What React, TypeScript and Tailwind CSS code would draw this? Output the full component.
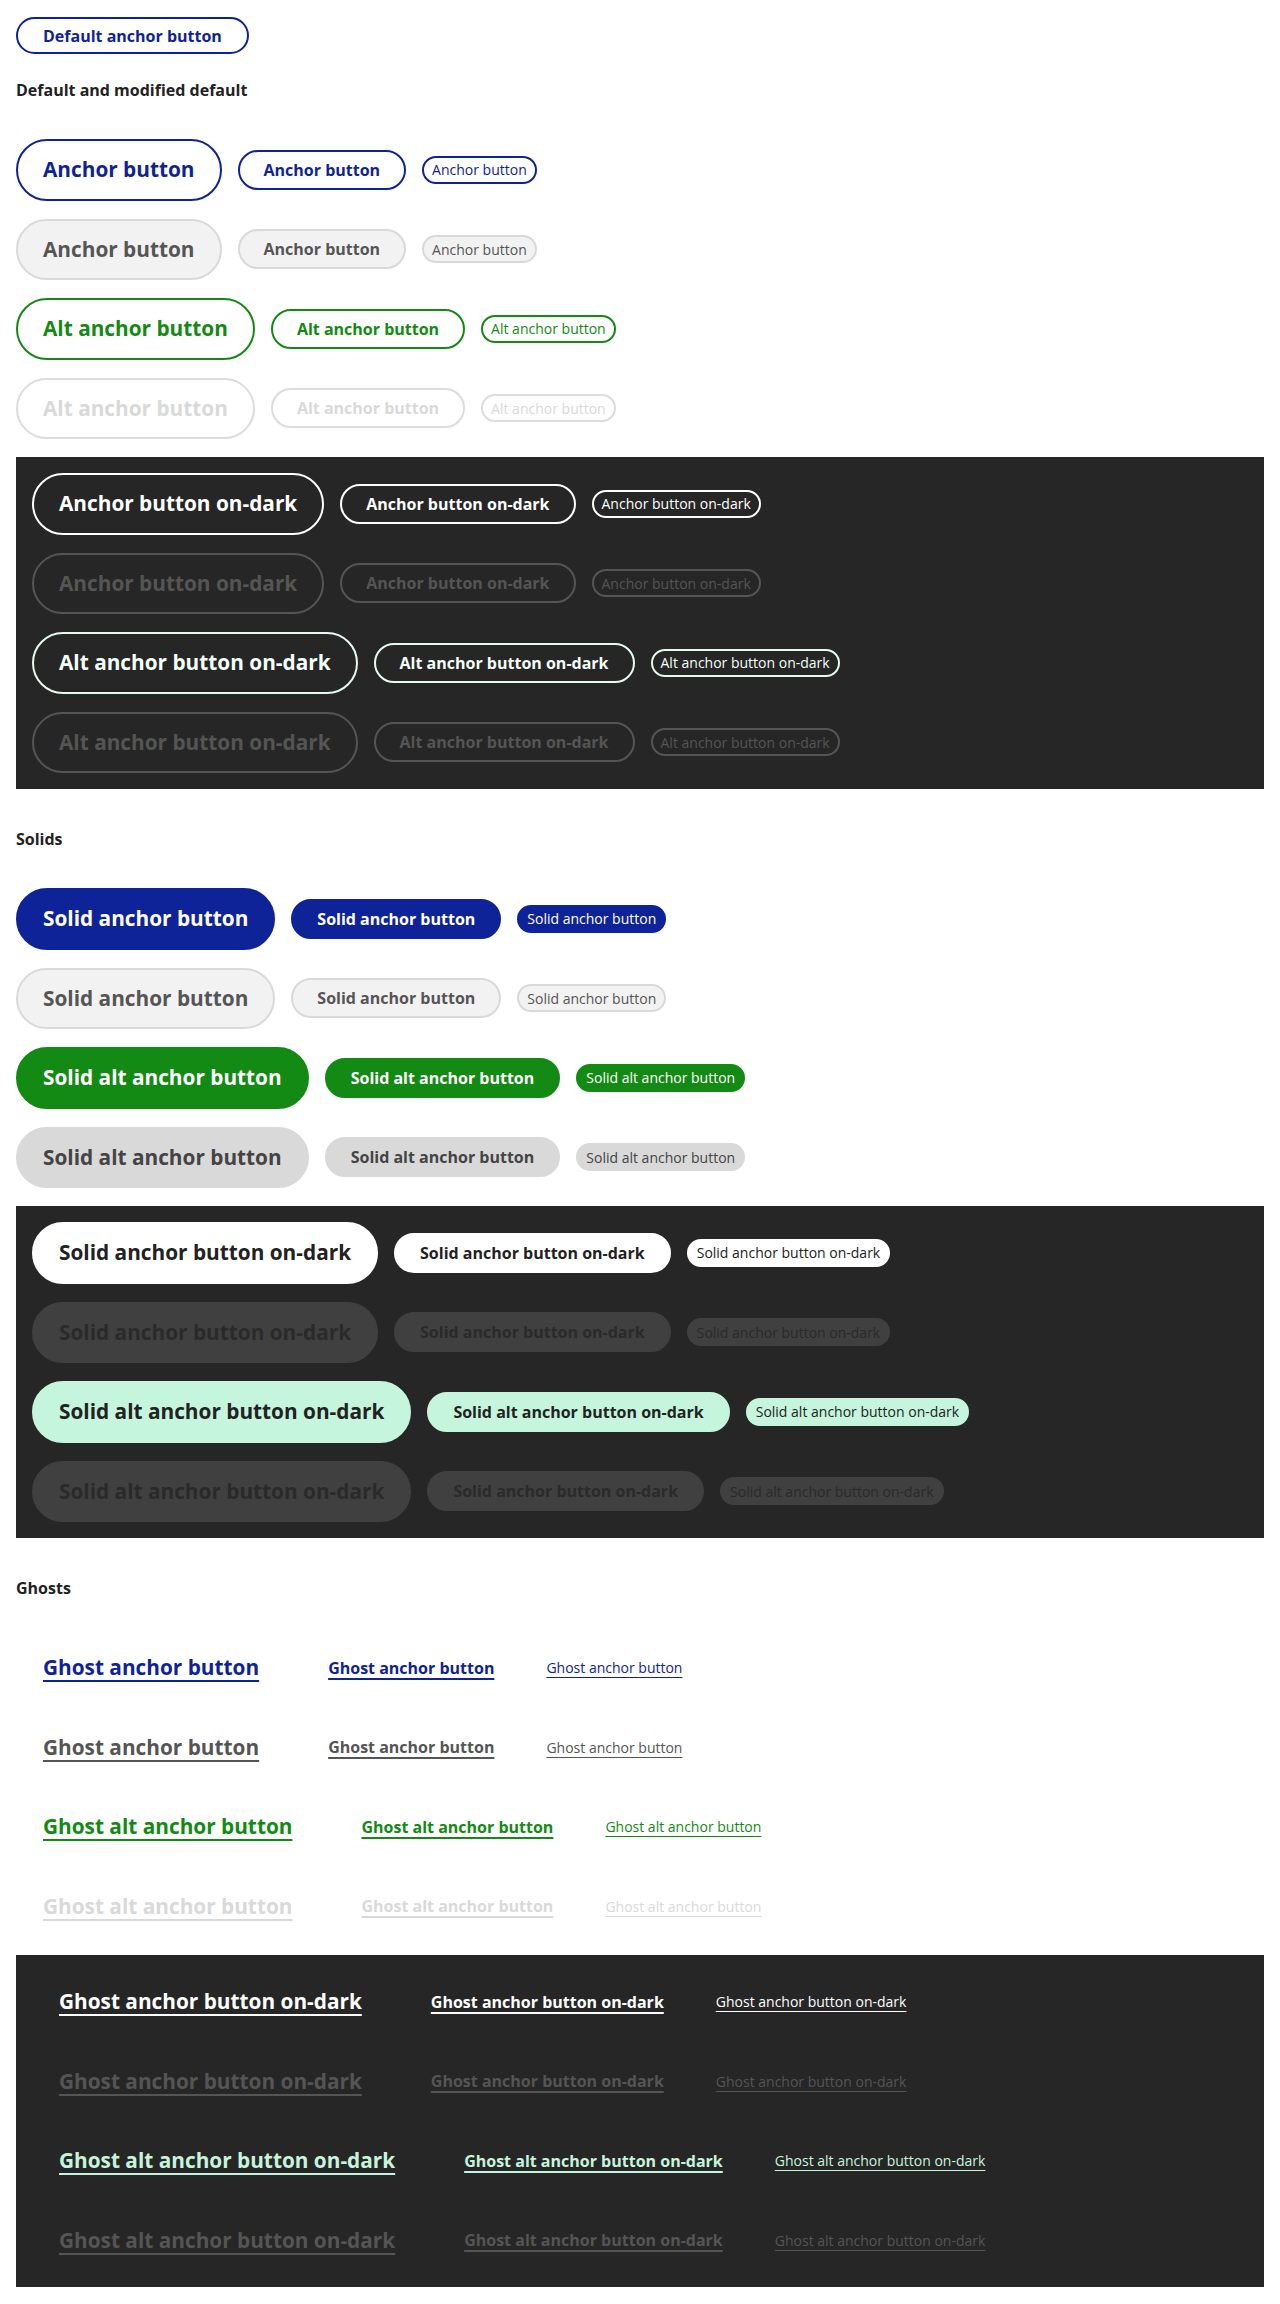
import React from "react";

type Size = "lg" | "md" | "sm";

const sizeCls: Record<Size, string> = {
    lg: "h-[61.5px] px-[25px] text-[20.8px] font-bold",
    md: "h-[40px] px-[24px] text-[16px] font-bold",
    sm: "h-[28px] px-[8px] text-[14px] font-normal",
};

const ghostLine: Record<Size, string> = {
    lg: "decoration-2 underline-offset-[5px]",
    md: "decoration-2 underline-offset-[4px]",
    sm: "decoration-1 underline-offset-[4px]",
};

type Row = { labels: [string, string, string]; cls: string; ghost?: boolean };

const AnchorButton = ({ size, label, cls, ghost }: { size: Size; label: string; cls: string; ghost?: boolean }) => (
    <a
        href="#"
        className={`inline-flex items-center whitespace-nowrap rounded-full border-2 ${sizeCls[size]} ${cls} ${ghost ? `underline ${ghostLine[size]}` : "no-underline"}`}
    >
        {label}
    </a>
);

const ButtonRow = ({ row }: { row: Row }) => (
    <div className="flex items-center gap-4">
        <AnchorButton size="lg" label={row.labels[0]} cls={row.cls} ghost={row.ghost} />
        <AnchorButton size="md" label={row.labels[1]} cls={row.cls} ghost={row.ghost} />
        <AnchorButton size="sm" label={row.labels[2]} cls={row.cls} ghost={row.ghost} />
    </div>
);

const same = (s: string): [string, string, string] => [s, s, s];

const Section = ({ title, light, dark }: { title: string; light: Row[]; dark: Row[] }) => (
    <section className="mt-10">
        <h2 className="text-[16px] leading-5 font-bold text-[#222] mb-[39px]">{title}</h2>
        <div className="flex flex-col gap-[18px]">
            {light.map((r, i) => (
                <ButtonRow key={i} row={r} />
            ))}
            <div className="bg-[#262626] p-4 flex flex-col gap-[18px]">
                {dark.map((r, i) => (
                    <ButtonRow key={i} row={r} />
                ))}
            </div>
        </div>
    </section>
);

const BLUE = "border-[#0f2399] text-[#0f2399] bg-white";
const GREEN = "border-[#138a13] text-[#138a13] bg-white";

const defaults: Row[] = [
    { labels: same("Anchor button"), cls: BLUE },
    { labels: same("Anchor button"), cls: "border-[#d9d9d9] bg-[#f2f2f2] text-[#555]" },
    { labels: same("Alt anchor button"), cls: GREEN },
    { labels: same("Alt anchor button"), cls: "border-[#dcdcdc] bg-white text-[#d9d9d9]" },
];

const defaultsDark: Row[] = [
    { labels: same("Anchor button on-dark"), cls: "border-white text-white bg-transparent" },
    { labels: same("Anchor button on-dark"), cls: "border-[#555] text-[#555] bg-transparent" },
    { labels: same("Alt anchor button on-dark"), cls: "border-[#e6fbee] text-[#f4fff8] bg-transparent" },
    { labels: same("Alt anchor button on-dark"), cls: "border-[#555] text-[#555] bg-transparent" },
];

const solids: Row[] = [
    { labels: same("Solid anchor button"), cls: "border-[#0f2399] bg-[#0f2399] text-white" },
    { labels: same("Solid anchor button"), cls: "border-[#d9d9d9] bg-[#f2f2f2] text-[#555]" },
    { labels: same("Solid alt anchor button"), cls: "border-[#138a13] bg-[#138a13] text-white" },
    { labels: same("Solid alt anchor button"), cls: "border-[#d9d9d9] bg-[#d9d9d9] text-[#444]" },
];

const solidsDark: Row[] = [
    { labels: same("Solid anchor button on-dark"), cls: "border-white bg-white text-[#222]" },
    { labels: same("Solid anchor button on-dark"), cls: "border-[#404040] bg-[#404040] text-[#2a2a2a]" },
    { labels: same("Solid alt anchor button on-dark"), cls: "border-[#c6f5dd] bg-[#c6f5dd] text-[#222]" },
    {
        labels: ["Solid alt anchor button on-dark", "Solid anchor button on-dark", "Solid alt anchor button on-dark"],
        cls: "border-[#404040] bg-[#404040] text-[#2a2a2a]",
    },
];

const ghosts: Row[] = [
    { labels: same("Ghost anchor button"), cls: "border-transparent text-[#0f2399]", ghost: true },
    { labels: same("Ghost anchor button"), cls: "border-transparent text-[#555]", ghost: true },
    { labels: same("Ghost alt anchor button"), cls: "border-transparent text-[#138a13]", ghost: true },
    { labels: same("Ghost alt anchor button"), cls: "border-transparent text-[#d9d9d9]", ghost: true },
];

const ghostsDark: Row[] = [
    { labels: same("Ghost anchor button on-dark"), cls: "border-transparent text-white", ghost: true },
    { labels: same("Ghost anchor button on-dark"), cls: "border-transparent text-[#555]", ghost: true },
    { labels: same("Ghost alt anchor button on-dark"), cls: "border-transparent text-[#c6f5dd]", ghost: true },
    { labels: same("Ghost alt anchor button on-dark"), cls: "border-transparent text-[#555]", ghost: true },
];

export default function App() {
    return (
        <div className="min-h-screen bg-white px-4 pt-[17px] pb-4 font-['Open_Sans',sans-serif]">
            <a
                href="#"
                className="inline-flex items-center h-[37px] px-[25px] rounded-full border-2 border-[#0f2399] text-[#0f2399] text-[16px] font-bold"
            >
                Default anchor button
            </a>

            {/* Default and modified default */}
            <div className="-mt-[14px]">
                <Section title="Default and modified default" light={defaults} dark={defaultsDark} />
            </div>

            <Section title="Solids" light={solids} dark={solidsDark} />

            <Section title="Ghosts" light={ghosts} dark={ghostsDark} />
        </div>
    );
}
